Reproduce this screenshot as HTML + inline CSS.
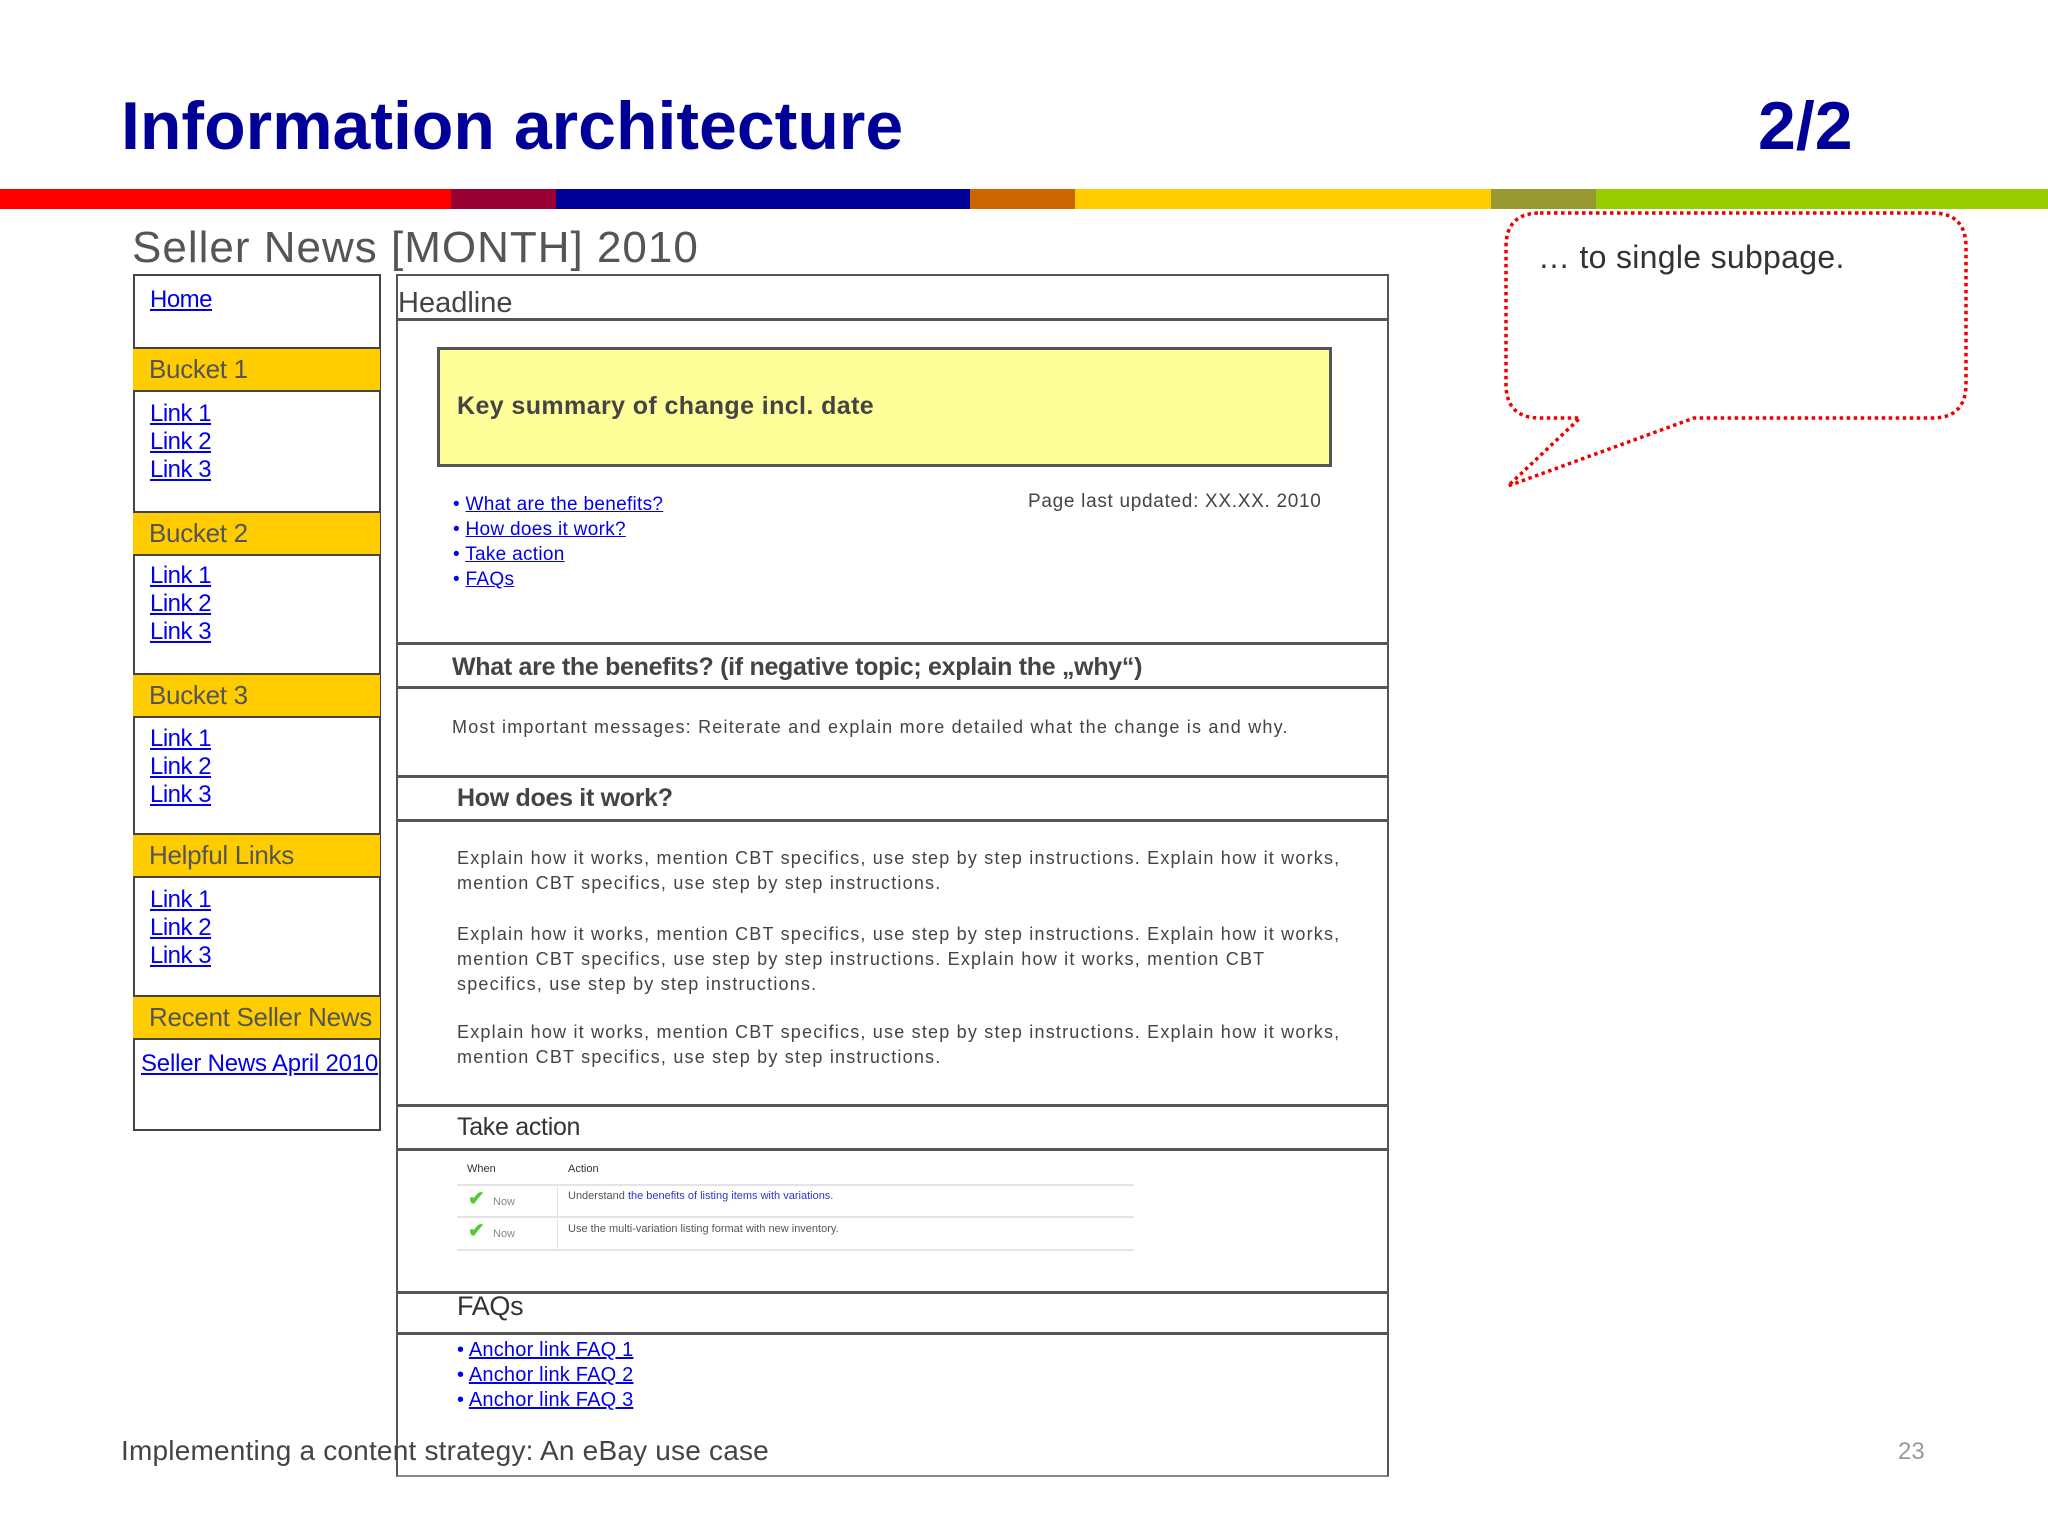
<!DOCTYPE html>
<html><head><meta charset="utf-8"><style>
*{margin:0;padding:0;box-sizing:border-box}
body{width:2048px;height:1536px;background:#fff;position:relative;overflow:hidden;font-family:"Liberation Sans",Arial,sans-serif}
.a{position:absolute;white-space:nowrap}
a,.l{color:#0000ee;text-decoration:underline}
.nav{font-size:24px;letter-spacing:-0.5px}
.bk{position:absolute;left:133px;width:247px;background:#fc0;border-top:2px solid #444;border-bottom:2px solid #444;font-size:26px;color:#555;padding-left:16px;letter-spacing:-0.3px}
.hl{position:absolute;left:396px;width:992px;height:3px;background:#555}
.h{font-size:25px;font-weight:bold;color:#444;letter-spacing:-0.3px}
.p{font-size:18px;color:#444;line-height:25px;letter-spacing:1.2px}
</style></head><body>
<div class="a" style="left:121px;top:86px;font-size:68px;font-weight:bold;color:#000099;line-height:80px">Information architecture</div>
<div class="a" style="left:1758px;top:86px;font-size:68px;font-weight:bold;color:#000099;line-height:80px">2/2</div>
<div class="a" style="top:189px;height:20px;left:0;width:451px;background:#f00"></div>
<div class="a" style="top:189px;height:20px;left:451px;width:105px;background:#903"></div>
<div class="a" style="top:189px;height:20px;left:556px;width:414px;background:#009"></div>
<div class="a" style="top:189px;height:20px;left:970px;width:105px;background:#c60"></div>
<div class="a" style="top:189px;height:20px;left:1075px;width:416px;background:#fc0"></div>
<div class="a" style="top:189px;height:20px;left:1491px;width:105px;background:#993"></div>
<div class="a" style="top:189px;height:20px;left:1596px;width:452px;background:#9c0"></div>

<div class="a" style="left:132px;top:222px;font-size:44px;color:#555;line-height:52px;letter-spacing:1px">Seller News [MONTH] 2010</div>

<div class="a" style="left:133px;top:274px;width:248px;height:857px;border:2px solid #444"></div>
<div class="a nav l" style="left:150px;top:286px">Home</div>
<div class="bk" style="top:347px;height:45px;line-height:41px">Bucket 1</div>
<div class="a nav l" style="left:150px;top:400px;line-height:28px">Link 1<br>Link 2<br>Link 3</div>
<div class="bk" style="top:511px;height:45px;line-height:41px">Bucket 2</div>
<div class="a nav l" style="left:150px;top:562px;line-height:28px">Link 1<br>Link 2<br>Link 3</div>
<div class="bk" style="top:673px;height:45px;line-height:41px">Bucket 3</div>
<div class="a nav l" style="left:150px;top:725px;line-height:28px">Link 1<br>Link 2<br>Link 3</div>
<div class="bk" style="top:833px;height:45px;line-height:41px">Helpful Links</div>
<div class="a nav l" style="left:150px;top:886px;line-height:28px">Link 1<br>Link 2<br>Link 3</div>
<div class="bk" style="top:995px;height:45px;line-height:41px;overflow:hidden">Recent Seller News</div>
<div class="a nav l" style="left:141px;top:1050px;line-height:28px;letter-spacing:-0.2px">Seller News April 2010</div>

<div class="a" style="left:396px;top:274px;width:993px;height:1203px;border:2px solid #555;border-bottom-color:#888"></div>
<div class="a" style="left:398px;top:286px;font-size:29px;color:#444;line-height:34px">Headline</div>
<div class="hl" style="top:318px"></div>
<div class="a" style="left:437px;top:347px;width:895px;height:120px;background:#ff9;border:3px solid #555"></div>
<div class="a h" style="left:457px;top:391px;line-height:30px;letter-spacing:0.4px">Key summary of change incl. date</div>
<div class="a" style="left:453px;top:492px;font-size:19px;line-height:25px;color:#0000ee;letter-spacing:0.3px">• <span class="l">What are the benefits?</span><br>• <span class="l">How does it work?</span><br>• <span class="l">Take action</span><br>• <span class="l">FAQs</span></div>
<div class="a" style="left:1028px;top:490px;font-size:19px;color:#444;line-height:24px;letter-spacing:0.7px">Page last updated: XX.XX. 2010</div>

<div class="hl" style="top:642px"></div>
<div class="a h" style="left:452px;top:652px;line-height:30px">What are the benefits? (if negative topic; explain the „why“)</div>
<div class="hl" style="top:686px"></div>
<div class="a p" style="left:452px;top:715px">Most important messages: Reiterate and explain more detailed what the change is and why.</div>
<div class="hl" style="top:775px"></div>
<div class="a h" style="left:457px;top:783px;line-height:30px">How does it work?</div>
<div class="hl" style="top:819px"></div>
<div class="a p" style="left:457px;top:846px">Explain how it works, mention CBT specifics, use step by step instructions. Explain how it works,<br>mention CBT specifics, use step by step instructions.</div>
<div class="a p" style="left:457px;top:922px">Explain how it works, mention CBT specifics, use step by step instructions. Explain how it works,<br>mention CBT specifics, use step by step instructions. Explain how it works, mention CBT<br>specifics, use step by step instructions.</div>
<div class="a p" style="left:457px;top:1020px">Explain how it works, mention CBT specifics, use step by step instructions. Explain how it works,<br>mention CBT specifics, use step by step instructions.</div>
<div class="hl" style="top:1104px"></div>
<div class="a h" style="left:457px;top:1112px;line-height:30px;font-weight:normal;color:#333">Take action</div>
<div class="hl" style="top:1148px"></div>
<div class="a" style="left:467px;top:1163px;font-size:11px;color:#333">When</div>
<div class="a" style="left:568px;top:1163px;font-size:11px;color:#333">Action</div>
<div class="a" style="left:457px;top:1184px;width:677px;height:2px;background:#e4e4e4"></div>
<div class="a" style="left:457px;top:1216px;width:677px;height:2px;background:#e4e4e4"></div>
<div class="a" style="left:457px;top:1249px;width:677px;height:2px;background:#e4e4e4"></div>
<div class="a" style="left:557px;top:1186px;width:1px;height:64px;background:#e4e4e4"></div>
<div class="a" style="left:468px;top:1186px;font-size:20px;color:#5c3;font-weight:bold">✔</div>
<div class="a" style="left:493px;top:1196px;font-size:11px;color:#888">Now</div>
<div class="a" style="left:468px;top:1218px;font-size:20px;color:#5c3;font-weight:bold">✔</div>
<div class="a" style="left:493px;top:1228px;font-size:11px;color:#888">Now</div>
<div class="a" style="left:568px;top:1190px;font-size:11px;color:#555">Understand <span style="color:#33c">the benefits of listing items with variations.</span></div>
<div class="a" style="left:568px;top:1223px;font-size:11px;color:#555">Use the multi-variation listing format with new inventory.</div>
<div class="hl" style="top:1291px"></div>
<div class="a h" style="left:457px;top:1290px;line-height:32px;font-weight:normal;color:#333;font-size:27px">FAQs</div>
<div class="hl" style="top:1332px"></div>
<div class="a" style="left:457px;top:1338px;font-size:20px;line-height:25px;color:#0000ee;letter-spacing:0.2px">• <span class="l">Anchor link FAQ 1</span><br>• <span class="l">Anchor link FAQ 2</span><br>• <span class="l">Anchor link FAQ 3</span></div>

<div class="a" style="left:121px;top:1434px;font-size:28px;color:#444;line-height:34px;letter-spacing:0.2px">Implementing a content strategy: An eBay use case</div>
<div class="a" style="left:1898px;top:1438px;font-size:24px;color:#999;line-height:28px">23</div>

<svg class="a" style="left:0;top:0" width="2048" height="1536">
<path d="M1540 213 H1932 Q1966 213 1966 247 V384 Q1966 418 1932 418 H1694 L1508 486 L1580 418 H1540 Q1506 418 1506 384 V247 Q1506 213 1540 213 Z" fill="none" stroke="#e00" stroke-width="3.5" stroke-dasharray="3.5 3.5"/>
</svg>
<div class="a" style="left:1538px;top:238px;font-size:32px;color:#333;line-height:38px;letter-spacing:0.3px">… to single subpage.</div>
</body></html>
